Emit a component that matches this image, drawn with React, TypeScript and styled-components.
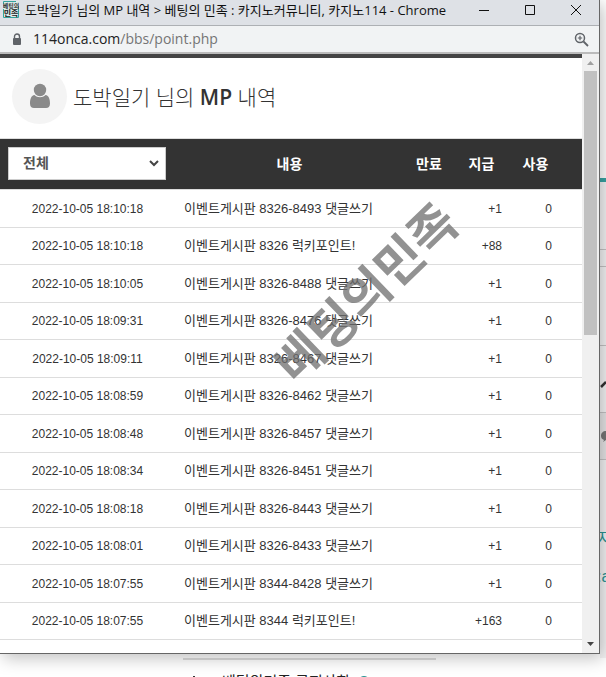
import React from "react";
import styled, { createGlobalStyle } from "styled-components";

const GlobalStyle = createGlobalStyle`
  * { box-sizing: border-box; }
  html, body { margin: 0; overflow: hidden; }
  body {
    font-family: "Liberation Sans", "Noto Sans CJK KR", sans-serif;
    font-size: 12px;
    color: #333;
  }
`;

const Desktop = styled.div`
  display: grid;
  grid-template: 100vh / minmax(0, 1fr);
  overflow: hidden;
  background: #fff;
`;

/* The site behind the popup window */
const BackPage = styled.div`
  grid-area: 1 / 1;
  display: grid;
  grid-template: minmax(0, 1fr) 19px / minmax(0, 1fr) 6px;
  overflow: hidden;
`;

const SideStrip = styled.div`
  grid-column: 2;
  display: flex;
  flex-direction: column;
  overflow: hidden;
  color: #2a9494;
  font-size: 16px;
  line-height: 20px;
  white-space: nowrap;
`;

const StripBlock = styled.div<{ $height: number; $tone?: string; $line?: boolean }>`
  display: flex;
  flex: none;
  align-items: center;
  height: ${(p) => p.$height}px;
  background: ${(p) => p.$tone ?? "#f4f3f4"};
  border-bottom: ${(p) => (p.$line ? "1px solid #c4c3c4" : "0")};
`;

const StripText = styled.span`
  flex: none;
  margin-left: -3px;
`;

const BottomStrip = styled.div`
  grid-column: 1 / 3;
  width: 253px;
  margin-left: 183px;
  border-top: 2px solid #dcdcdc;
`;

const Notice = styled.div`
  display: flex;
  align-items: center;
  gap: 8px;
  padding: 13px 0 0 10px;
  color: #222;
  font-size: 15px;
  line-height: 18px;
  white-space: nowrap;
`;

const NoticeTick = styled.span`
  width: 2px;
  height: 12px;
  background: #333;
`;

const NoticeMark = styled.span`
  width: 11px;
  height: 11px;
  border: 1px solid #999;
`;

const NoticeDot = styled.span`
  width: 12px;
  height: 12px;
  border-radius: 50%;
  background: #2a9494;
`;

const Window = styled.div`
  grid-area: 1 / 1;
  z-index: 1;
  display: flex;
  flex-direction: column;
  min-height: 0;
  margin: 0 6px 23px 0;
  background: #fff;
  border-right: 1px solid #666;
  border-bottom: 1px solid #666;
  box-shadow: 3px 4px 16px rgba(0, 0, 0, 0.25);
`;

const TitleBar = styled.header`
  display: flex;
  flex: none;
  align-items: center;
  height: 26px;
  padding: 0 17px 6px 3px;
  background: #dee1e6;
  border-bottom: 1px solid #adb0b4;
`;

const Favicon = styled.svg`
  flex: none;
  width: 16px;
  height: 17px;
  margin-right: 6px;
`;

const TitleText = styled.div`
  flex: 1;
  overflow: hidden;
  color: #111;
  font-family: "Open Sans", "Noto Sans CJK KR", sans-serif;
  font-size: 13px;
  line-height: 20px;
  white-space: nowrap;
`;

const WindowButtons = styled.div`
  display: flex;
  gap: 34px;
`;

const IconButton = styled.button`
  display: flex;
  padding: 0;
  border: 0;
  background: none;
  color: #111;
`;

const AddressBar = styled.div`
  display: flex;
  flex: none;
  align-items: center;
  height: 28px;
  padding: 0 10px 0 12px;
  background: #f1f3f4;
  border-bottom: 2px solid #bbb;
`;

const Url = styled.div`
  flex: 1;
  margin-left: 11px;
  color: #757575;
  font-family: "Open Sans", sans-serif;
  font-size: 14px;
  line-height: 20px;
`;

const Host = styled.span`
  color: #222;
`;

const Viewport = styled.div`
  display: flex;
  flex: 1;
  min-height: 0;
`;

const Page = styled.main`
  position: relative;
  flex: 1;
  min-width: 0;
  overflow: hidden;
  background: #fff;
  border-top: 4px solid #444;
`;

const Profile = styled.div`
  display: flex;
  align-items: center;
  gap: 6px;
  height: 81px;
  padding: 0 12px 4px;
  border-bottom: 1px solid #ddd;
`;

const Avatar = styled.div`
  display: flex;
  align-items: center;
  justify-content: center;
  width: 55px;
  height: 55px;
  border-radius: 50%;
  background: #f4f4f4;
`;

const Heading = styled.h1`
  margin: 0;
  padding-top: 2px;
  color: #333;
  font-family: "Open Sans", "Noto Sans CJK KR", sans-serif;
  font-size: 21px;
  font-weight: 300;
  line-height: 28px;

  b { font-weight: 600; }
`;

const PointTable = styled.table`
  width: 100%;
  border-collapse: separate;
  border-spacing: 0;
  table-layout: fixed;
`;

const HeadCell = styled.th<{ $width?: number; $last?: boolean }>`
  width: ${(p) => (p.$width ? `${p.$width}px` : "auto")};
  height: 51px;
  padding: 0 ${(p) => (p.$last ? 20 : 0)}px 2px 0;
  background: #333;
  border-bottom: 1px solid #ddd;
  color: #fff;
  font-size: 14px;
  font-weight: 700;
  text-align: center;
`;

const FilterBox = styled.div`
  display: flex;
  align-items: center;
  height: 33px;
  margin: 0 9px 0 8px;
  padding-right: 4px;
  background: #fff;
  border: 1px solid #ccc;
`;

const FilterSelect = styled.select`
  flex: 1;
  height: 31px;
  margin-right: -14px;
  padding: 0 14px;
  appearance: none;
  border: 0;
  background: transparent;
  color: #555;
  font-family: inherit;
  font-size: 14px;
  font-weight: 700;
`;

const Chevron = styled.svg`
  flex: none;
  pointer-events: none;
`;

const Row = styled.tr`
  height: 38px;
  &:nth-child(even) { height: 37px; }
`;

const Cell = styled.td<{ $align?: "center" | "right"; $end?: number; $start?: number; $large?: boolean }>`
  padding: 0 ${(p) => p.$end ?? 0}px 0 ${(p) => p.$start ?? 0}px;
  border-bottom: 1px solid #ddd;
  font-size: ${(p) => (p.$large ? 13 : 12)}px;
  line-height: 20px;
  text-align: ${(p) => p.$align ?? "left"};
  white-space: nowrap;
`;

const Watermark = styled.div`
  position: absolute;
  top: 236px;
  left: 63%;
  color: rgba(110, 110, 110, 0.75);
  font-size: 50px;
  font-weight: 700;
  line-height: 1;
  white-space: nowrap;
  pointer-events: none;
  transform: translate(-50%, -50%) rotate(-44deg);
`;

const ScrollTrack = styled.div`
  display: flex;
  flex: none;
  flex-direction: column;
  align-items: center;
  width: 17px;
  background: #f0f0f0;
`;

const ScrollThumb = styled.div`
  width: 13px;
  height: 44%;
  background: #c1c1c1;
`;

const ScrollArrow = styled.svg`
  flex: none;
  width: 17px;
  height: 17px;
`;

const Spring = styled.div`
  flex: 1;
`;

const rows: [string, string, string][] = [
  ["2022-10-05 18:10:18", "이벤트게시판 8326-8493 댓글쓰기", "+1"],
  ["2022-10-05 18:10:18", "이벤트게시판 8326 럭키포인트!", "+88"],
  ["2022-10-05 18:10:05", "이벤트게시판 8326-8488 댓글쓰기", "+1"],
  ["2022-10-05 18:09:31", "이벤트게시판 8326-8476 댓글쓰기", "+1"],
  ["2022-10-05 18:09:11", "이벤트게시판 8326-8467 댓글쓰기", "+1"],
  ["2022-10-05 18:08:59", "이벤트게시판 8326-8462 댓글쓰기", "+1"],
  ["2022-10-05 18:08:48", "이벤트게시판 8326-8457 댓글쓰기", "+1"],
  ["2022-10-05 18:08:34", "이벤트게시판 8326-8451 댓글쓰기", "+1"],
  ["2022-10-05 18:08:18", "이벤트게시판 8326-8443 댓글쓰기", "+1"],
  ["2022-10-05 18:08:01", "이벤트게시판 8326-8433 댓글쓰기", "+1"],
  ["2022-10-05 18:07:55", "이벤트게시판 8344-8428 댓글쓰기", "+1"],
  ["2022-10-05 18:07:55", "이벤트게시판 8344 럭키포인트!", "+163"],
];

export default function App() {
  return (
    <>
      <GlobalStyle />
      <Desktop>
        <BackPage>
          <SideStrip>
            <StripBlock $height={178} $tone="#fff" />
            <StripBlock $height={4} $tone="#38a3a3" />
            <StripBlock $height={68} $line />
            <StripBlock $height={17} $line />
            <StripBlock $height={79} $line />
            <StripBlock $height={67} $line>
              <svg width="6" height="20" viewBox="0 0 6 20">
                <path d="M1 18L6 13" stroke="#333" strokeWidth="2.5" />
              </svg>
            </StripBlock>
            <StripBlock $height={47} $line $tone="#e6e5e6">
              <svg width="6" height="14" viewBox="0 0 6 14">
                <path d="M6 2C3 2 1 4 1 7c0 2 1 3 3 4l-1 2 3-2z" fill="#777" />
              </svg>
            </StripBlock>
            <StripBlock $height={68} />
            <StripBlock $height={22}>
              <StripText>지</StripText>
            </StripBlock>
            <StripBlock $height={16} />
            <StripBlock $height={22}>
              <StripText>:a</StripText>
            </StripBlock>
            <StripBlock $height={100} />
          </SideStrip>
          <BottomStrip>
            <Notice>
              <NoticeTick />
              <NoticeMark />
              <span>베팅의민족 공지사항</span>
              <NoticeDot />
            </Notice>
          </BottomStrip>
        </BackPage>

        <Window>
          <TitleBar>
            <Favicon viewBox="0 0 16 17">
              <rect width="16" height="17" fill="#d9ebea" />
              <path d="M.5 3V.5H13M15.500 5v11.500H.5V8" fill="none" stroke="#35a39d" />
              <text x="8" y="7" fontSize="6" fontWeight="700" textAnchor="middle" fill="#333">베팅의</text>
              <text x="8" y="15" fontSize="8" fontWeight="700" textAnchor="middle" fill="#222">민족</text>
            </Favicon>
            <TitleText>도박일기 님의 MP 내역 &gt; 베팅의 민족 : 카지노커뮤니티, 카지노114 - Chrome</TitleText>
            <WindowButtons>
              <IconButton aria-label="최소화">
                <svg width="12" height="12" viewBox="0 0 12 12" stroke="currentColor">
                  <path d="M1 6.500h10" />
                </svg>
              </IconButton>
              <IconButton aria-label="최대화">
                <svg width="12" height="12" viewBox="0 0 12 12" fill="none" stroke="currentColor">
                  <path d="M1.500 1.500h9v9h-9z" />
                </svg>
              </IconButton>
              <IconButton aria-label="닫기">
                <svg width="12" height="12" viewBox="0 0 12 12" stroke="currentColor">
                  <path d="M1 1l10 10M11 1L1 11" />
                </svg>
              </IconButton>
            </WindowButtons>
          </TitleBar>
          <AddressBar>
            <svg width="10" height="13" viewBox="0 0 10 13">
              <path d="M2.500 6V3.500a2.500 2.500 0 0 1 5 0V6" fill="none" stroke="#5f6368" strokeWidth="1.400" />
              <rect x="1" y="5" width="8" height="7" rx="1" fill="#5f6368" />
            </svg>
            <Url>
              <Host>114onca.com</Host>/bbs/point.php
            </Url>
            <IconButton aria-label="확대">
              <svg width="15" height="15" viewBox="0 0 15 15" fill="none" stroke="#5f6368" strokeWidth="1.500">
                <circle cx="6" cy="6" r="4.500" />
                <path d="M9.500 9.500L14 14" strokeWidth="1.800" />
                <path d="M6 3.800v4.400M3.800 6h4.400" strokeWidth="1.200" />
              </svg>
            </IconButton>
          </AddressBar>

          <Viewport>
            <Page>
              <Profile>
                <Avatar>
                  <svg width="22" height="26" viewBox="0 0 22 26" fill="#8a8a8a">
                    <circle cx="11" cy="7" r="6.200" />
                    <path d="M5.500 12C2 12.500 1 16.500 1 20.500c0 3 1.500 4.500 4 4.500h12c2.500 0 4-1.500 4-4.500 0-4-1-8-4.500-8.500-1.500 1.500-3.400 2.200-5.500 2.200S7 13.500 5.500 12z" />
                  </svg>
                </Avatar>
                <Heading>
                  도박일기 님의 <b>MP</b> 내역
                </Heading>
              </Profile>
              <PointTable>
                <thead>
                  <tr>
                    <HeadCell $width={175} scope="col">
                      <FilterBox>
                        <FilterSelect aria-label="내역 구분" defaultValue="전체">
                          <option>전체</option>
                        </FilterSelect>
                        <Chevron width="14" height="10" viewBox="0 0 14 10" fill="none" stroke="#444" strokeWidth="2">
                          <path d="M3 3l4 4 4-4" />
                        </Chevron>
                      </FilterBox>
                    </HeadCell>
                    <HeadCell scope="col">내용</HeadCell>
                    <HeadCell $width={50} scope="col">만료</HeadCell>
                    <HeadCell $width={55} scope="col">지급</HeadCell>
                    <HeadCell $width={73} $last scope="col">사용</HeadCell>
                  </tr>
                </thead>
                <tbody>
                  {rows.map(([date, text, paid], i) => (
                    <Row key={i}>
                      <Cell $align="center">{date}</Cell>
                      <Cell $start={9} $large>{text}</Cell>
                      <Cell />
                      <Cell $align="right" $end={7}>{paid}</Cell>
                      <Cell $align="right" $end={30}>0</Cell>
                    </Row>
                  ))}
                </tbody>
              </PointTable>
              <Watermark>베팅의민족</Watermark>
            </Page>
            <ScrollTrack>
              <ScrollArrow viewBox="0 0 17 17">
                <path d="M5 11l3.500-4 3.500 4z" fill="#a0a0a0" />
              </ScrollArrow>
              <ScrollThumb />
              <Spring />
              <ScrollArrow viewBox="0 0 17 17">
                <path d="M5 6l3.500 4L12 6z" fill="#444" />
              </ScrollArrow>
            </ScrollTrack>
          </Viewport>
        </Window>
      </Desktop>
    </>
  );
}
